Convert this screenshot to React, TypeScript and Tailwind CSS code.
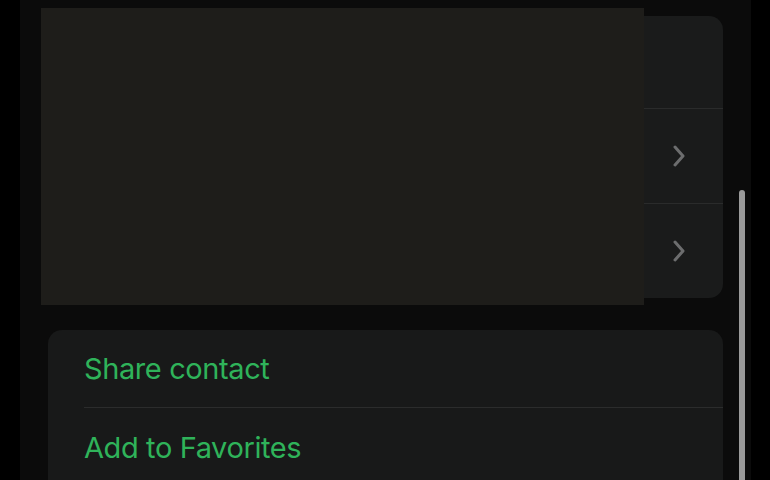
import * as React from 'react'

const font = { fontFamily: 'Inter, "Noto Sans", sans-serif' }

function Chevron() {
  return (
    <svg width="14" height="22" viewBox="0 0 14 22" fill="none" aria-hidden="true">
      <path d="M3 2l8 9-8 9" stroke="#6c6d6e" strokeWidth="3" strokeLinecap="round" strokeLinejoin="round" />
    </svg>
  )
}

export default function App() {
  return (
    <div className="relative flex h-[480px] w-[770px] overflow-hidden bg-black" style={font}>
      <div className="relative ml-[20px] h-full w-[731px] bg-[#0b0b0b]">
        <div className="mx-[28px] mt-[16px] flex h-[282px] flex-col overflow-hidden rounded-[14px] bg-[#1a1b1b]">
          <div className="h-[93px] border-b border-[#2a2b2b]" />
          <div className="flex h-[95px] items-center justify-end border-b border-[#2a2b2b] pr-[37px]">
            <Chevron />
          </div>
          <div className="flex flex-1 items-center justify-end pr-[37px]">
            <Chevron />
          </div>
        </div>

        <div className="mx-[28px] mt-[32px] rounded-t-[14px] bg-[#181919]">
          <div className="flex h-[77px] items-center pl-[36px]">
            <span className="text-[29px] leading-none tracking-[-0.4px] text-[#2fb35a]">Share contact</span>
          </div>
          <div className="ml-[36px] h-px bg-[#2b2c2c]" />
          <div className="flex h-[78px] items-center pl-[36px]">
            <span className="text-[29px] leading-none tracking-[-0.4px] text-[#2fb35a]">Add to Favorites</span>
          </div>
        </div>

        {/* redaction block */}
        <div className="absolute left-[21px] top-[8px] h-[297px] w-[603px] bg-[#1e1d1a]" />

        {/* scrollbar */}
        <div className="absolute left-[719px] top-[190px] h-[300px] w-[6px] rounded-full bg-[#9a9a9a]" />
      </div>
    </div>
  )
}
